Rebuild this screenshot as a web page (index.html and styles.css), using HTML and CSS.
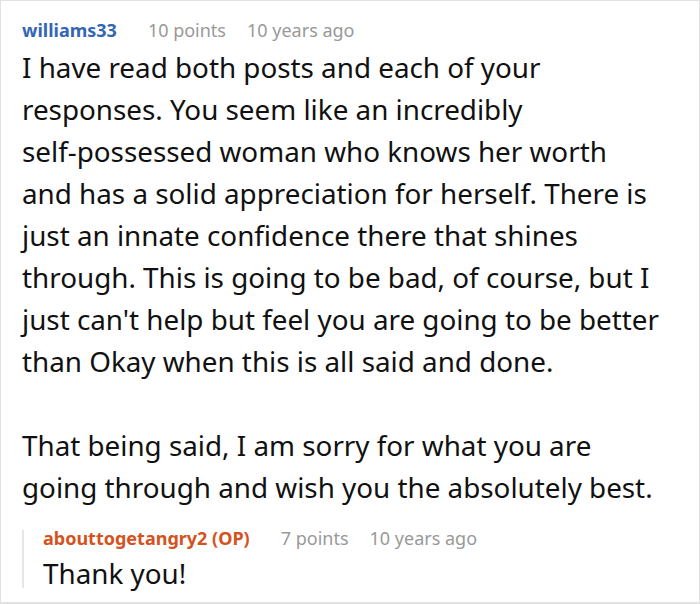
FILE: index.html
```html
<!DOCTYPE html>
<html>
<head>
<meta charset="utf-8">
<link rel="stylesheet" href="styles.css">
</head>
<body>
<div class="thread">
  <div class="comment">
    <div class="meta">
      <span class="author">williams33</span>
      <span class="info">10 points</span>
      <span class="info">10 years ago</span>
    </div>
    <div class="body">
      <p>I have read both posts and each of your responses. You seem like an incredibly self&#8209;possessed woman who knows her worth and has a solid appreciation for herself. There is just an innate confidence there that shines through. This is going to be bad, of course, but I just can't help but feel you are going to be better than Okay when this is all said and done.</p>
      <p>That being said, I am sorry for what you are going through and wish you the absolutely best.</p>
    </div>
    <div class="reply">
      <div class="meta">
        <span class="author op">abouttogetangry2 (OP)</span>
        <span class="info">7 points</span>
        <span class="info">10 years ago</span>
      </div>
      <div class="body">
        <p>Thank you!</p>
      </div>
    </div>
  </div>
</div>
</body>
</html>
```
FILE: styles.css
```css
html, body {
  margin: 0;
  padding: 0;
  background: #fff;
}
.thread {
  width: 700px;
  height: 604px;
  box-sizing: border-box;
  border: 1px solid #e2e2e2;
  border-bottom-width: 2px;
  overflow: hidden;
  font-family: "Noto Sans", sans-serif;
}
.comment {
  padding: 17px 40px 0 21px;
}
.meta {
  display: flex;
  gap: 21px;
  align-items: baseline;
  font-size: 18px;
  line-height: 24px;
}
.author {
  font-weight: 700;
  color: #3366b4;
  margin-right: 10px;
}
.author.op {
  color: #d4521e;
}
.info {
  color: #999;
}
.body {
  font-size: 27.8px;
  line-height: 42px;
  color: #111;
}
.body p {
  margin: 4px 0 42px;
}
.body p:last-child {
  margin-bottom: 0;
}
.reply {
  margin-top: 27px;
  border-left: 2px solid #e6e6e6;
  padding-left: 19px;
}
.reply .meta {
  line-height: 16px;
  margin-top: -5px;
}
.reply .body {
  line-height: 30px;
}
.reply .body p {
  margin: 12px 0 -3px;
}
```
